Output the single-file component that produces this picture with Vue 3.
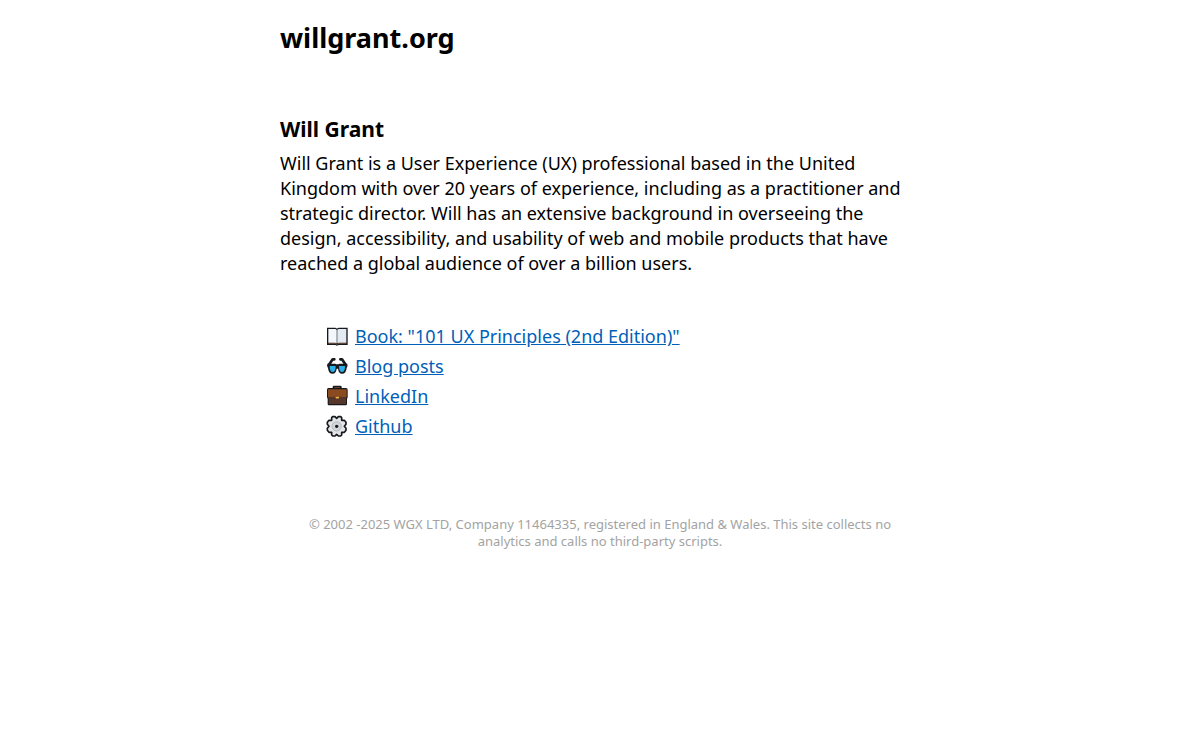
<script setup>
const links = [
  { icon: 'book', text: 'Book: "101 UX Principles (2nd Edition)"' },
  { icon: 'glasses', text: 'Blog posts' },
  { icon: 'case', text: 'LinkedIn' },
  { icon: 'gear', text: 'Github' },
]
</script>

<template>
  <div class="page">
    <h1>willgrant.org</h1>
    <main>
      <h2>Will Grant</h2>
      <p class="bio">Will Grant is a User Experience (UX) professional based in the United Kingdom with over 20 years of experience, including as a practitioner and strategic director. Will has an extensive background in overseeing the design, accessibility, and usability of web and mobile products that have reached a global audience of over a billion users.</p>
      <ul>
        <li v-for="l in links" :key="l.icon">
          <svg v-if="l.icon === 'book'" viewBox="0 0 66 66" aria-hidden="true">
            <path d="M3 8H27Q31 8 33 11Q35 8 39 8H65V60H38L33 62L28 60H3Z" fill="#17191c" />
            <path d="M7 12H27Q32 12 32 16V55Q30 53 27 53H7Z" fill="#f4f8fc" />
            <path d="M61 12H39Q34 12 34 16V55Q36 53 39 53H61Z" fill="#e3eaf1" />
            <path d="M7 54H27Q31 54 33 57Q35 54 39 54H61V56H38L33 59L28 56H7Z" fill="#80543e" />
            <path d="M33 16V54" stroke="#c2c9d1" stroke-width="2" />
          </svg>
          <svg v-else-if="l.icon === 'glasses'" viewBox="0 0 66 66" aria-hidden="true">
            <path d="M8 31L20 13H25M60 31L48 13H43" fill="none" stroke="#17191c" stroke-width="8" stroke-linecap="round" stroke-linejoin="round" />
            <path d="M4 26H28Q34 29 40 26H64V36L62 38Q61 56 48 56Q38 56 36 41H32Q30 56 20 56Q7 56 6 38L4 36Z" fill="#17191c" />
            <path d="M11 33H29Q29 51 20 51Q11 51 11 33ZM39 33H57Q57 51 48 51Q39 51 39 33Z" fill="#2caee8" />
          </svg>
          <svg v-else-if="l.icon === 'case'" viewBox="0 0 66 66" aria-hidden="true">
            <path d="M20 9V6Q20 2 24 2H43Q47 2 47 6V9H60Q65 9 65 14V37L63 41V57Q63 61 59 61H9Q5 61 5 57V41L3 37V14Q3 9 7 9Z" fill="#17191c" />
            <path d="M25 9V6H42V9Z" fill="#70402c" />
            <path d="M8 35H60V57H8Z" fill="#56352b" />
            <path d="M6 13H62V34Q62 39 57 39H11Q6 39 6 34Z" fill="#8b4b20" />
            <path d="M8 38Q34 34 60 38" fill="none" stroke="#3a251f" stroke-width="2" />
            <path d="M29 35H39V39Q34 42 29 39Z" fill="#f0b744" />
          </svg>
          <svg v-else viewBox="0 0 66 66" aria-hidden="true">
            <path d="M20 5H27L32 10L37 5H44L47 8V16H55L60 22V28L55 34L60 40V46L55 52H47V60L44 63H37L32 58L27 63H20L17 60V52H9L4 46V40L9 34L4 28V22L9 16H17V8Z" fill="#e3e5e8" stroke="#17191c" stroke-width="5" stroke-linejoin="round" />
            <circle cx="32" cy="34" r="14" fill="#d2d5d9" stroke="#a3a6ab" stroke-width="2" />
            <circle cx="32" cy="34" r="5" fill="#17191c" />
          </svg>
          <a href="#">{{ l.text }}</a>
        </li>
      </ul>
    </main>
    <footer>© 2002 -2025 WGX LTD, Company 11464335, registered in England &amp; Wales. This site collects no analytics and calls no third-party scripts.</footer>
  </div>
</template>

<style>
body { margin: 0; background: #fff; }
</style>
<style scoped>
.page { max-width: 640px; margin: 0 auto; padding-top: 18px; font-family: "Noto Sans", "Open Sans", sans-serif; font-size: 18px; line-height: 25px; color: #000; }
h1 { margin: 0 0 56px; font-size: 27px; line-height: 40px; }
h2 { margin: 0 0 7px; font-size: 21px; line-height: 30px; }
.bio { margin: 0; }
ul { list-style: none; margin: 45px 0 0; padding: 0 0 0 46px; }
li { display: flex; align-items: center; gap: 7px; line-height: 30px; }
svg { width: 22px; height: 22px; flex: none; }
a { color: #0060b8; }
footer { margin: 75px 0 0; padding: 0 20px; text-align: center; font-size: 13px; line-height: 17px; color: #a3a3a3; }
</style>
